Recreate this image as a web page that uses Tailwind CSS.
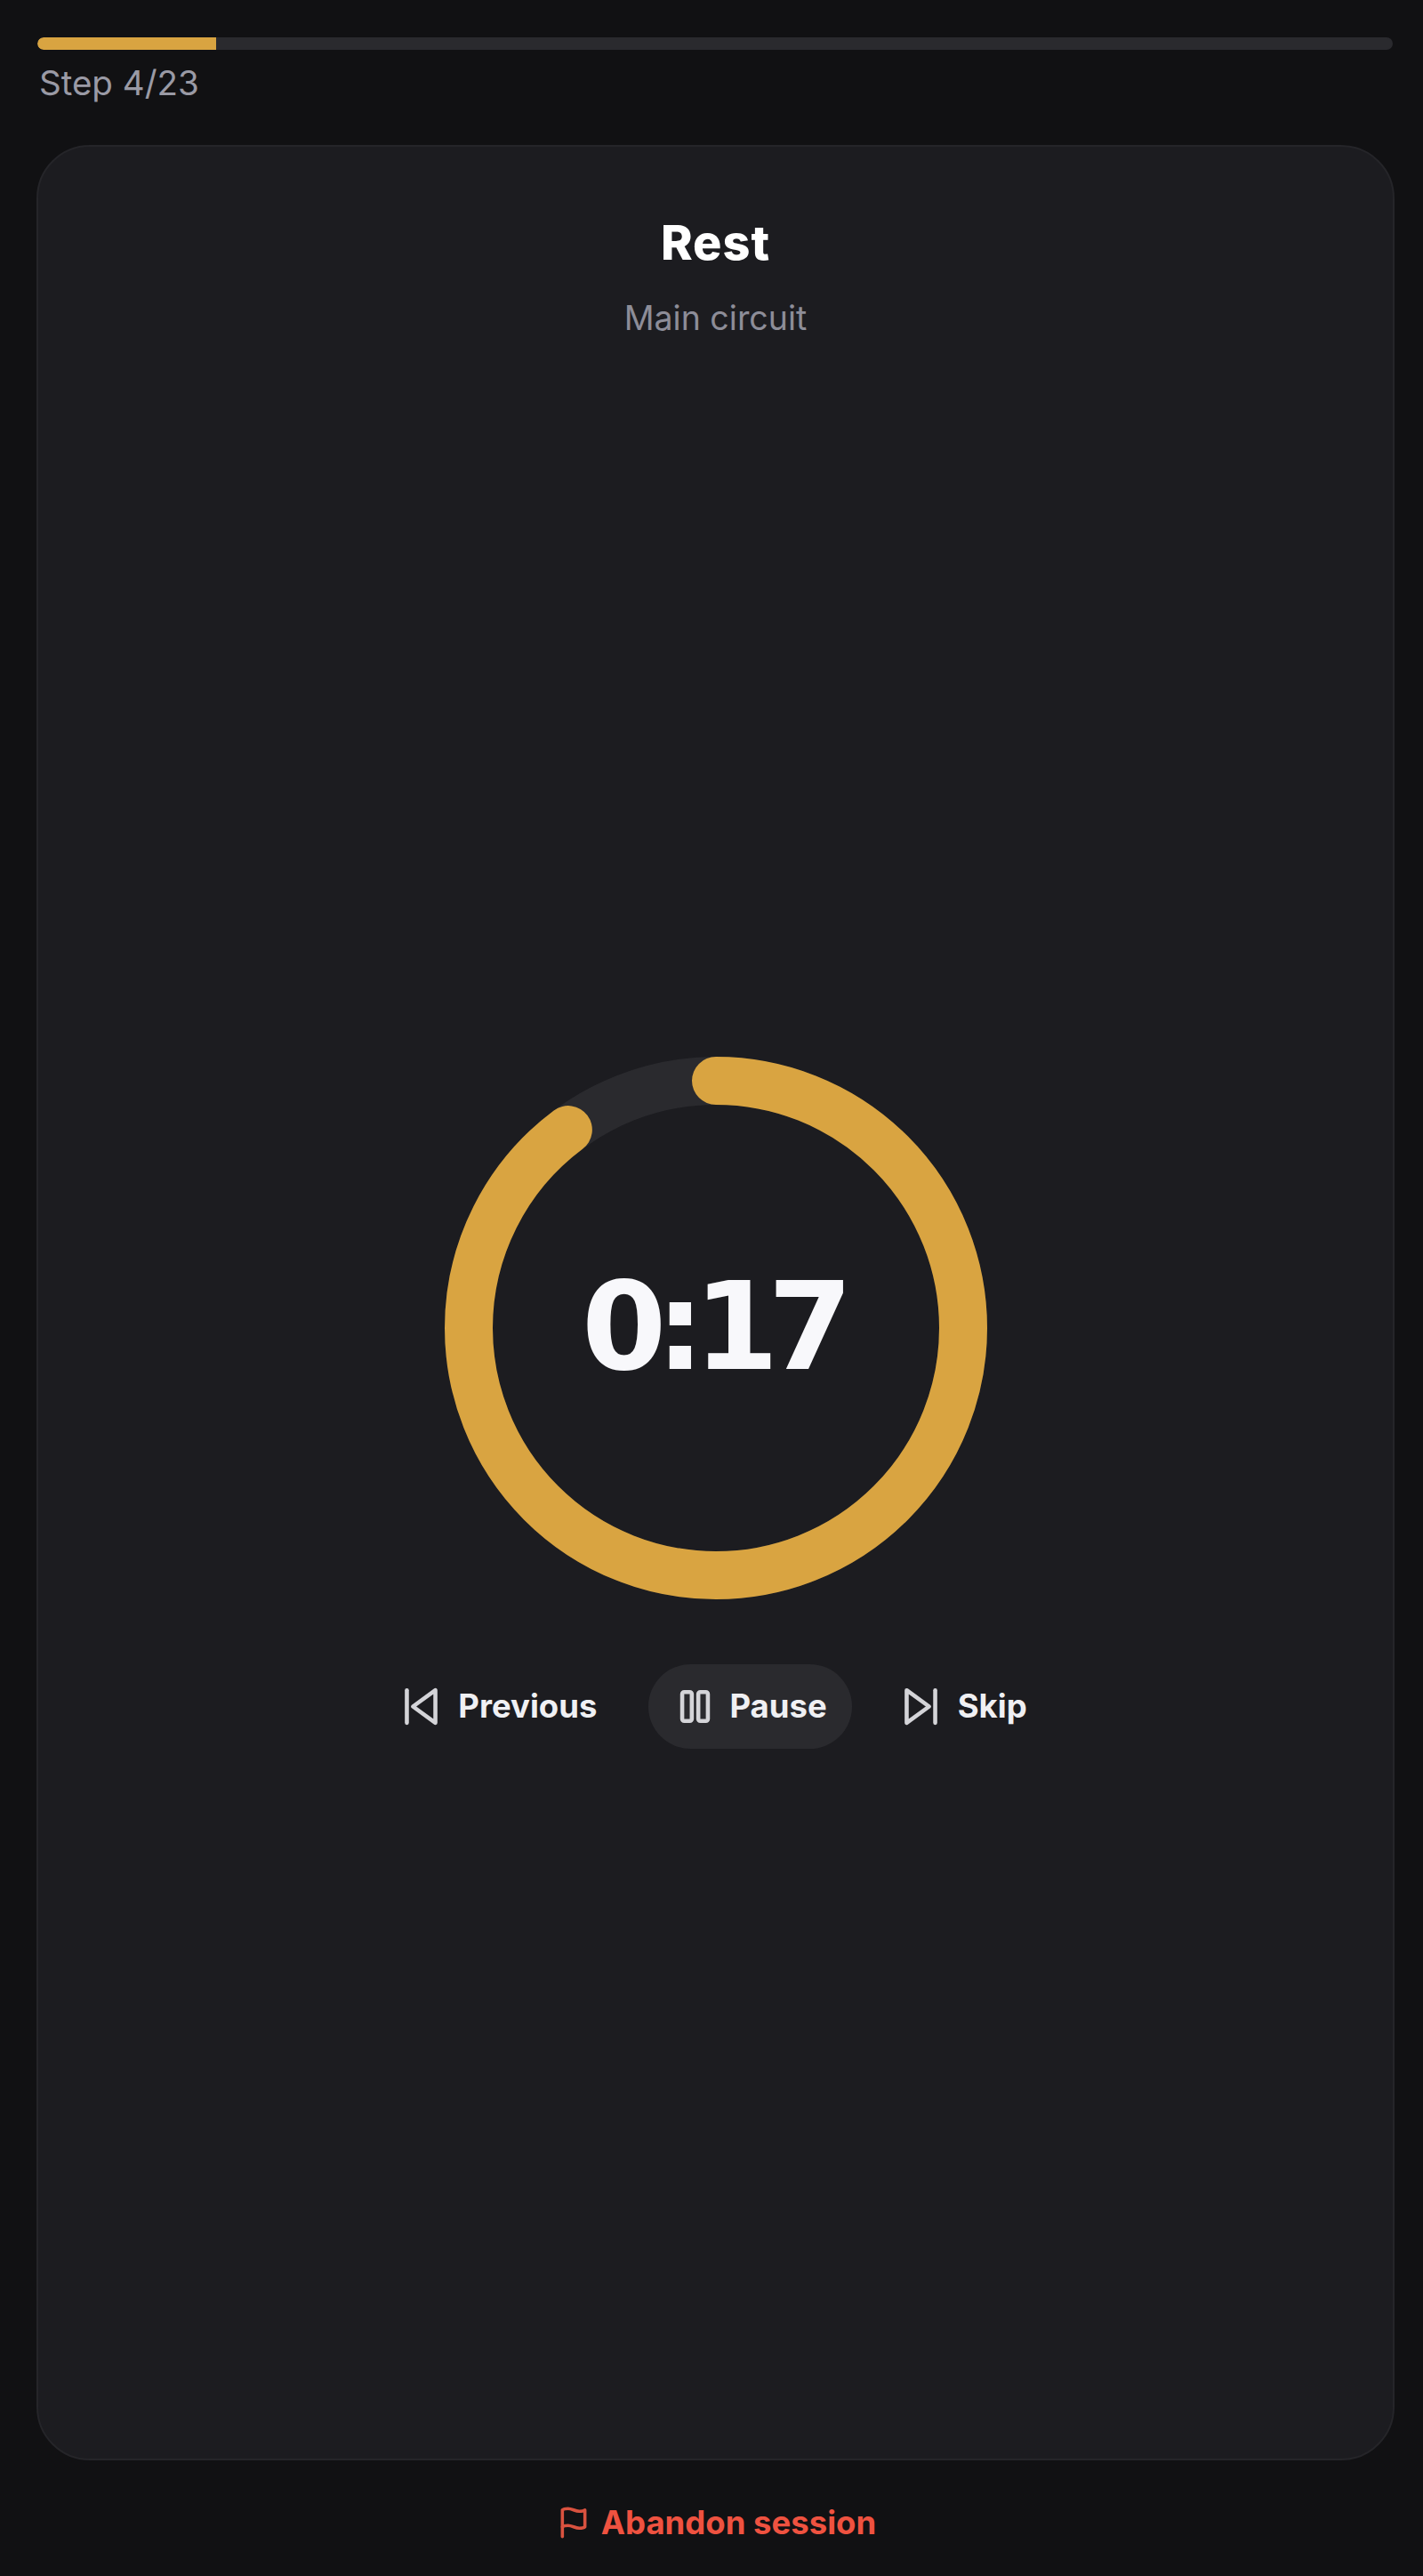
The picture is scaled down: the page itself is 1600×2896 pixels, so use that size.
<!doctype html>
<html lang="en">
    <head>
        <meta charset="utf-8">
        <title>Rest</title>
        <script src="https://cdn.jsdelivr.net/npm/@tailwindcss/browser@4"></script>
    </head>
    <body class="bg-[#111113] text-white font-['Inter',sans-serif]">
        <div class="flex flex-col h-[2896px] pl-[41px] pr-[32px] pt-[42px]">
            <div class="h-[14px] ml-[1px] mr-[2px] rounded-full bg-[#2a2a2e] overflow-hidden">
                <div class="h-full w-[13.2%] bg-[#d9a441] rounded-l-full"></div>
            </div>
            <p class="pl-[3px] mt-[12px] h-[95px] text-[38.5px] leading-[50px] text-[#9a9aa5]">Step 4/23</p>
            <div class="flex flex-col h-[2603px] rounded-[60px] bg-[#1c1c20] border-2 border-[#252529]">
                <div class="text-center pt-[73px]">
                    <h1 class="text-[54px] leading-[70px] font-extrabold tracking-[1px]">Rest</h1>
                    <p class="mt-[25px] text-[37.5px] leading-[50px] text-[#8d8d98]">Main circuit</p>
                </div>
                <div class="flex flex-1 flex-col items-center justify-center pt-[6px]">
                    <div class="relative w-[610px] h-[610px]">
                        <svg class="w-full h-full -rotate-90" viewBox="0 0 610 610" fill="none" stroke-width="54">
                            <circle cx="305" cy="305" r="278" stroke="#2a2a2e"></circle>
                            <circle cx="305" cy="305" r="278" stroke="#d9a441" stroke-linecap="round" stroke-dasharray="1568 1747"></circle>
                        </svg>
                        <div class="absolute inset-0 flex items-center justify-center pr-[8px] pb-[2px] text-[137px] font-bold font-['DejaVu_Sans',sans-serif] tracking-[-12px] text-[#f8f8fb]">0:17</div>
                    </div>
                    <div class="flex items-center gap-[24px] mt-[73px] text-[36.5px] font-bold text-[#f0f0f3]">
                        <button class="flex items-center gap-[22px] h-[95px] px-[34px] rounded-full">
                            <svg class="w-[55px] h-[55px] -mx-[8px]" viewBox="0 0 24 24" fill="none" stroke="#d4d4d8" stroke-width="2" stroke-linecap="round" stroke-linejoin="round"><polygon points="19 20 8 12 19 4 19 20"></polygon><line x1="5" y1="20" x2="5" y2="4"></line></svg>
                            Previous
                        </button>
                        <button class="flex items-center gap-[22px] h-[95px] pl-[36px] pr-[28px] rounded-full bg-[#2a2a2e]">
                            <svg class="w-[55px] h-[55px] -mx-[11px]" viewBox="0 0 24 24" fill="none" stroke="#d4d4d8" stroke-width="2" stroke-linecap="round" stroke-linejoin="round"><rect x="5.7" y="4.9" width="4.7" height="14.2" rx="1"></rect><rect x="13.6" y="4.9" width="4.7" height="14.2" rx="1"></rect></svg>
                            Pause
                        </button>
                        <button class="flex items-center gap-[22px] h-[95px] px-[34px] rounded-full">
                            <svg class="w-[55px] h-[55px] -mx-[8px]" viewBox="0 0 24 24" fill="none" stroke="#d4d4d8" stroke-width="2" stroke-linecap="round" stroke-linejoin="round"><polygon points="5 4 16 12 5 20 5 4"></polygon><line x1="19" y1="4" x2="19" y2="20"></line></svg>
                            Skip
                        </button>
                    </div>
                </div>
            </div>
            <div class="flex flex-1 items-center justify-center gap-[12px] pt-[10px] pl-[2px] text-[36.5px] font-bold text-[#ef5240]">
                <svg class="w-[38px] h-[38px]" viewBox="0 0 24 24" fill="none" stroke="#d9523f" stroke-width="2.25" stroke-linecap="round" stroke-linejoin="round"><path d="M4 15s1-1 4-1 5 2 8 2 4-1 4-1V3s-1 1-4 1-5-2-8-2-4 1-4 1z"></path><line x1="4" y1="22" x2="4" y2="15"></line></svg>
                Abandon session
            </div>
        </div>
    </body>
</html>
